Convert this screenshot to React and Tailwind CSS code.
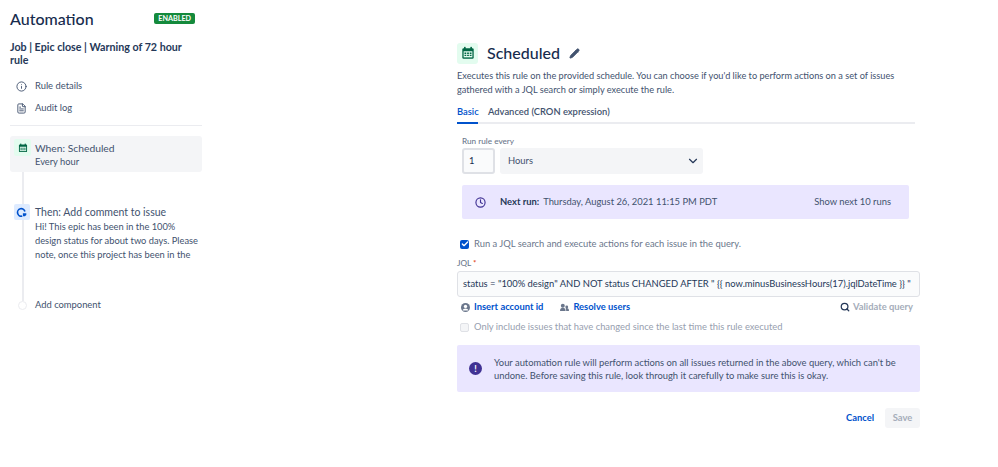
import React from 'react';
import { ChevronDown, Search, Check, Pencil, Clock, Info, FileText } from 'lucide-react';

const Calendar = ({ size }) => (
  <svg width={size} height={size} viewBox="0 0 16 16" fill="none">
    <rect x="1.5" y="2.5" width="13" height="12" rx="1.5" fill="#006644" />
    <rect x="3.5" y="1" width="1.8" height="3" fill="#006644" />
    <rect x="10.7" y="1" width="1.8" height="3" fill="#006644" />
    <rect x="3" y="6" width="10" height="7" fill="#E3FCEF" />
    <path d="M4 7.5h2v1.500H4zM7 7.5h2v1.500H7zM10 7.5h2v1.500h-2zM4 10h2v1.500H4zM7 10h2v1.500H7zM10 10h2v1.500h-2z" fill="#006644" />
  </svg>
);

const App = () => {
  return (
    <div className="w-[998px] h-[467px] bg-white flex font-['Lato',sans-serif] text-[#253858] overflow-hidden">
      {/* Sidebar */}
      <div className="w-[192px] ml-[10px] shrink-0">
        <div className="flex items-start justify-between pr-[7px] pt-[9px]">
          <h1 className="text-[16px] leading-[19px] font-medium text-[#172b4d]">Automation</h1>
          <span className="mt-[4px] h-[11px] px-[4px] rounded-[2px] bg-[#148a3c] text-white text-[7.2px] leading-[11px] font-bold">ENABLED</span>
        </div>
        <h2 className="mt-[12px] text-[10.7px] leading-[13px] font-bold text-[#253858]">Job | Epic close | Warning of 72 hour rule</h2>
        <div className="mt-[9px] flex items-center gap-[8px] pl-[6px] h-[22px] text-[9.4px] text-[#42526e]">
          <Info size={11} />
          <span>Rule details</span>
        </div>
        <div className="flex items-center gap-[8px] pl-[6px] h-[22px] text-[9.4px] text-[#42526e]">
          <FileText size={11} />
          <span>Audit log</span>
        </div>
        <div className="mt-[6px] h-[1px] bg-[#ebecf0]"></div>

        <div className="mt-[10px] h-[36px] bg-[#f4f5f7] rounded-[3px] flex">
          <div className="w-[17px] h-[17px] mt-[3px] ml-[4px] bg-[#e3fcef] rounded-[2px] flex items-center justify-center">
            <Calendar size={10} />
          </div>
          <div className="ml-[4px] pt-[5px]">
            <div className="text-[10.3px] leading-[14px] text-[#42526e]">When: Scheduled</div>
            <div className="text-[9.3px] leading-[14px] text-[#42526e]">Every hour</div>
          </div>
        </div>

        <div className="flex">
          <div className="w-[25px] shrink-0 flex flex-col items-center">
            <div className="w-[2px] h-[32px] bg-[#ebecf0]"></div>
            <div className="w-[16px] h-[16px] -ml-[2px] bg-[#deebff] rounded-[2px] flex items-center justify-center">
              <svg width="11" height="11" viewBox="0 0 16 16" fill="none">
                <path d="M13 6.5A5.5 5.5 0 1 0 9 13.3" stroke="#0052cc" strokeWidth="2.4" />
                <path d="M10 9h5v2.5l-2 2h-3z" fill="#0052cc" />
              </svg>
            </div>
            <div className="w-[2px] h-[81px] bg-[#ebecf0]"></div>
            <div className="w-[9px] h-[9px] rounded-full border border-[#ebecf0]"></div>
          </div>
          <div className="pt-[32px]">
            <div className="text-[10.5px] leading-[16px] text-[#42526e]">Then: Add comment to issue</div>
            <div className="text-[9.3px] leading-[14px] text-[#42526e] w-[167px]">Hi! This epic has been in the 100% design status for about two days. Please note, once this project has been in the</div>
            <div className="mt-[36px] text-[9.4px] leading-[14px] text-[#42526e]">Add component</div>
          </div>
        </div>
      </div>

      {/* Main panel */}
      <div className="ml-[255px] w-[463px] shrink-0 pt-[42px] text-[#42526e]">
        <div className="flex items-center h-[22px]">
          <div className="w-[21px] h-[21px] bg-[#e3fcef] rounded-[3px] flex items-center justify-center">
            <Calendar size={14} />
          </div>
          <span className="ml-[9px] text-[16px] font-medium text-[#172b4d]">Scheduled</span>
          <Pencil size={11} className="ml-[9px] text-[#42526e] fill-[#42526e]" />
        </div>
        <p className="mt-[5px] text-[9.2px] leading-[14px] w-[450px]">Executes this rule on the provided schedule. You can choose if you'd like to perform actions on a set of issues gathered with a JQL search or simply execute the rule.</p>

        <div className="mt-[8px] w-[458px] flex gap-[10px] border-b-2 border-[#ebecf0] text-[9.4px] h-[19px] font-semibold">
          <span className="text-[#0052cc] border-b-2 border-[#0052cc] h-[19px] w-[21px]">Basic</span>
          <span>Advanced (CRON expression)</span>
        </div>

        <div className="mt-[11px] ml-[5px] text-[8.2px] leading-[12px] text-[#6b778c] font-medium">Run rule every</div>
        <div className="mt-[1px] ml-[5px] flex gap-[5px]">
          <div className="w-[33px] h-[26px] border-2 border-[#dfe1e6] bg-[#fafbfc] rounded-[3px] text-[9.4px] leading-[22px] pl-[5px] text-[#172b4d]">1</div>
          <div className="w-[203px] h-[26px] bg-[#f4f5f7] rounded-[3px] flex items-center justify-between pl-[8px] pr-[3px] text-[9.4px]">
            <span>Hours</span>
            <ChevronDown size={14} className="text-[#253858]" />
          </div>
        </div>

        <div className="mt-[11px] ml-[5px] w-[447px] h-[34px] bg-[#eae6ff] rounded-[2px] flex items-center pl-[13px] pr-[18px] text-[9.4px]">
          <Clock size={11} strokeWidth={2.5} className="text-[#403294]" />
          <span className="ml-[14px] font-bold text-[#253858]">Next run:</span>
          <span className="ml-[4px]">Thursday, August 26, 2021 11:15 PM PDT</span>
          <span className="ml-auto">Show next 10 runs</span>
        </div>

        <div className="mt-[18px] ml-[3px] flex items-center h-[14px] text-[9.4px] text-[#6b778c]">
          <div className="w-[9px] h-[9px] bg-[#0052cc] rounded-[2px] flex items-center justify-center">
            <Check size={8} strokeWidth={4} className="text-white" />
          </div>
          <span className="ml-[5px]">Run a JQL search and execute actions for each issue in the query.</span>
        </div>

        <div className="mt-[7px] text-[8.2px] leading-[11px] text-[#6b778c] font-medium">JQL <span className="text-[#de350b]">*</span></div>
        <div className="mt-[2px] w-[463px] h-[26px] border border-[#dfe1e6] bg-[#fafbfc] rounded-[3px] text-[9.4px] leading-[24px] pl-[5px] text-[#253858] whitespace-nowrap">status = "100% design" AND NOT status CHANGED AFTER " {'{{'} now.minusBusinessHours(17).jqlDateTime {'}}'} "</div>

        <div className="mt-[2px] h-[16px] flex items-center pl-[4px] text-[9.4px] font-bold text-[#0052cc]">
          <svg width="9" height="9" viewBox="0 0 16 16"><circle cx="8" cy="8" r="8" fill="#6b778c" /><circle cx="8" cy="6" r="3" fill="white" /><path d="M2.5 13.500a6 6 0 0 1 11 0z" fill="white" /></svg>
          <span className="ml-[4px]">Insert account id</span>
          <svg className="ml-[17px]" width="9" height="9" viewBox="0 0 16 16" fill="#6b778c"><circle cx="5" cy="5" r="3.5" /><circle cx="12" cy="7" r="2.5" /><path d="M0 14c0-4 2-5.5 5-5.5s5 1.500 5 5.500zM11 14c0-2-.5-3.500-1-4.500 3-1.500 6 0 6 4.500z" /></svg>
          <span className="ml-[4px]">Resolve users</span>
          <Search size={10} strokeWidth={3} className="ml-auto text-[#253858]" />
          <span className="ml-[3px] mr-[7px] text-[#a5adba]">Validate query</span>
        </div>

        <div className="mt-[5px] ml-[3px] flex items-center h-[14px] text-[9.4px] text-[#97a0af]">
          <div className="w-[9px] h-[9px] border border-[#dfe1e6] bg-[#f4f5f7] rounded-[2px]"></div>
          <span className="ml-[5px]">Only include issues that have changed since the last time this rule executed</span>
        </div>

        <div className="mt-[11px] w-[463px] h-[47px] bg-[#eae6ff] rounded-[2px] flex items-center pl-[12px] text-[9.4px] leading-[13px]">
          <div className="w-[13px] h-[13px] rounded-full bg-[#403294] text-white text-[9px] leading-[13px] font-bold text-center shrink-0">!</div>
          <p className="ml-[12px] w-[410px]">Your automation rule will perform actions on all issues returned in the above query, which can't be undone. Before saving this rule, look through it carefully to make sure this is okay.</p>
        </div>

        <div className="mt-[16px] w-[463px] flex justify-end items-center gap-[11px] text-[9.4px] font-bold">
          <span className="text-[#0052cc]">Cancel</span>
          <span className="w-[35px] h-[20px] bg-[#f4f5f7] rounded-[3px] text-[#a5adba] text-center leading-[20px]">Save</span>
        </div>
      </div>
    </div>
  );
};

export default App;
